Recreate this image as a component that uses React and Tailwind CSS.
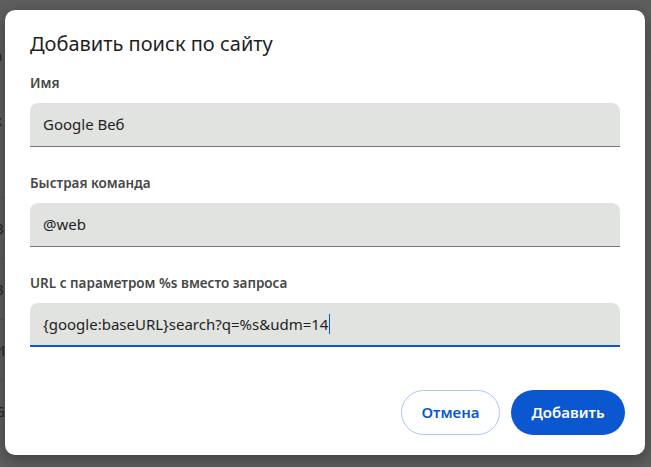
import React from 'react';

const leftRows = ['а', 'к', 'В', 'В', 'И', 'G'];

function Field({ label, value, focused }) {
  return (
    <div className="flex flex-col">
      <div className="h-5 text-[13.5px] leading-5 font-semibold text-[#474747]">{label}</div>
      <div
        className={
          'mt-[10px] h-[44px] flex items-center rounded-t-lg bg-[#e1e3e1] pl-[13px] text-[15px] text-[#1f1f1f] ' +
          (focused ? 'border-b-2 border-[#0b57d0]' : 'border-b border-[#747775]')
        }
      >
        <span>{value}</span>
        {focused && <span className="ml-px h-[20px] w-px bg-[#0b57d0]"></span>}
      </div>
    </div>
  );
}

export default function App() {
  return (
    <div
      className="relative h-[467px] w-[651px] overflow-hidden bg-[#5e5e5e]"
      style={{ fontFamily: '"Noto Sans", "Open Sans", sans-serif' }}
    >
      {/* dimmed page behind the dialog */}
      <div className="flex h-full justify-between">
        <div className="-ml-[6px] flex w-[120px] flex-col pt-[20px] text-[15px] text-[#2b2b2b]">
          <div className="h-[60px] leading-[70px]">{leftRows[0]}</div>
          <div className="h-[117px] pt-[29px]">{leftRows[1]}</div>
          {leftRows.slice(2).map((r, i) => (
            <div key={i} className="flex h-[61px] items-center border-t border-[#555555]">{r}</div>
          ))}
        </div>
        <div className="mr-[-10px] flex w-[40px] flex-col pt-[52px] text-[15px] text-[#1d2f5a]">
          <div className="flex h-[43px] items-center border-y border-[#535a66] pl-[4px]">б</div>
        </div>
      </div>

      {/* dialog */}
      <div className="absolute left-[5px] top-[10px] flex h-[445px] w-[640px] flex-col rounded-[10px] bg-white pl-[25px] pr-[20px] pt-[22px] pb-[20px] shadow-[0_4px_16px_rgba(0,0,0,0.35)]">
        <div className="h-6 text-[20px] leading-6 text-[#1f1f1f]">Добавить поиск по сайту</div>
        <div className="mt-[17px] flex flex-col gap-[26px] pr-[5px]">
          <Field label="Имя" value="Google Веб" />
          <Field label="Быстрая команда" value="@web" />
          <Field label="URL с параметром %s вместо запроса" value="{google:baseURL}search?q=%s&udm=14" focused />
        </div>
        <div className="mt-auto flex justify-end gap-[11px]">
          <button className="h-[45px] w-[99px] rounded-full border border-[#a8c7fa] text-[15px] font-semibold text-[#0b57d0]">
            Отмена
          </button>
          <button className="h-[45px] w-[114px] rounded-full bg-[#0b57d0] text-[15px] font-semibold text-white">
            Добавить
          </button>
        </div>
      </div>
    </div>
  );
}
